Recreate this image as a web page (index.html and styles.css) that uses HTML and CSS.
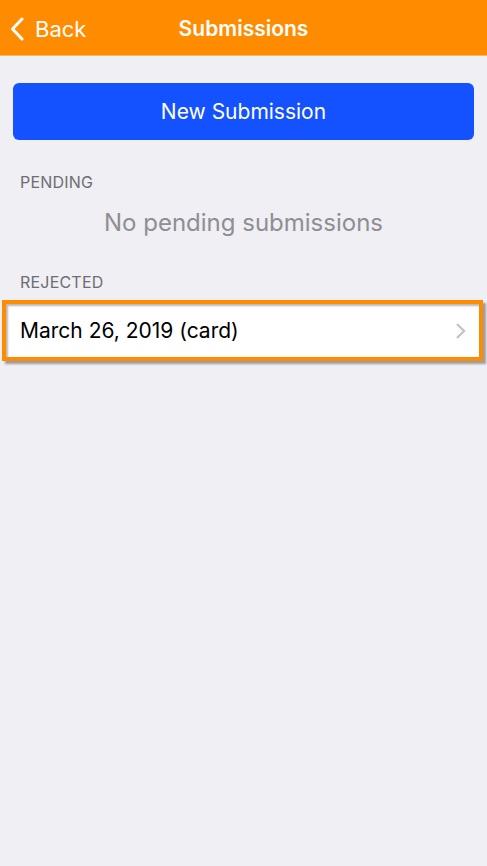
FILE: index.html
```html
<!DOCTYPE html>
<html>
<head>
<meta charset="utf-8">
<link rel="stylesheet" href="styles.css">
</head>
<body>
<div class="screen">
  <header class="navbar">
    <div class="back">
      <svg class="back-icon" width="14" height="24" viewBox="0 0 14 24"><path d="M12 2 L2.5 12 L12 22" fill="none" stroke="#fff" stroke-width="3" stroke-linecap="round" stroke-linejoin="round"/></svg>
      <span>Back</span>
    </div>
    <div class="title">Submissions</div>
  </header>
  <main class="content">
    <div class="btn-wrap"><button class="new-btn">New Submission</button></div>
    <div class="section-label">PENDING</div>
    <div class="empty">No pending submissions</div>
    <div class="section-label rejected">REJECTED</div>
    <div class="card">
      <span class="card-text">March 26, 2019 (card)</span>
      <svg class="chev" width="11" height="18" viewBox="0 0 11 18"><path d="M2 2 L9 9 L2 16" fill="none" stroke="#c4c4c9" stroke-width="2.4"/></svg>
    </div>
  </main>
</div>
</body>
</html>
```

FILE: styles.css
```css
html, body { margin: 0; padding: 0; }
body {
  width: 487px;
  height: 866px;
  background: #efeff4;
  font-family: "Inter", "Roboto", "Liberation Sans", sans-serif;
  overflow: hidden;
}
.screen { display: flex; flex-direction: column; height: 866px; }
.navbar {
  height: 56px;
  background: #ff8c00;
  border-bottom: 1px solid #f4b56a;
  box-sizing: border-box;
  display: flex;
  align-items: center;
  justify-content: center;
  position: relative;
  color: #fff;
}
.back {
  position: absolute;
  left: 10px;
  top: 16px;
  display: flex;
  align-items: center;
  gap: 11px;
  font-size: 22px;
}
.back-icon { display: block; }
.title { font-size: 21px; font-weight: 600; margin-top: 1px; }
.content { display: flex; flex-direction: column; }
.btn-wrap { padding: 27px 13px 0 13px; }
.new-btn {
  width: 100%;
  height: 57px;
  border: none;
  border-radius: 6px;
  background: #1452ff;
  color: #fff;
  font-family: inherit;
  font-size: 21px;
  padding: 0;
}
.section-label {
  margin: 32px 0 0 20px;
  font-size: 16px;
  color: #6d6d72;
  letter-spacing: 0.2px;
  line-height: 20px;
}
.empty {
  text-align: center;
  font-size: 24px;
  color: #8e8e93;
  margin-top: 16px;
  line-height: 30px;
}
.section-label.rejected { margin-top: 34px; }
.card {
  margin: 8px 4px 0 2px;
  height: 61px;
  box-sizing: border-box;
  border: 4px solid #ff8c00;
  background: #fff;
  box-shadow: 3px 3px 2px rgba(90, 90, 90, 0.55), inset 2px 2px 2px rgba(100,100,100,0.45);
  display: flex;
  align-items: center;
  justify-content: space-between;
  padding: 0 13px 0 14px;
}
.card-text { font-size: 21px; color: #000; }
.chev { display: block; }
```
